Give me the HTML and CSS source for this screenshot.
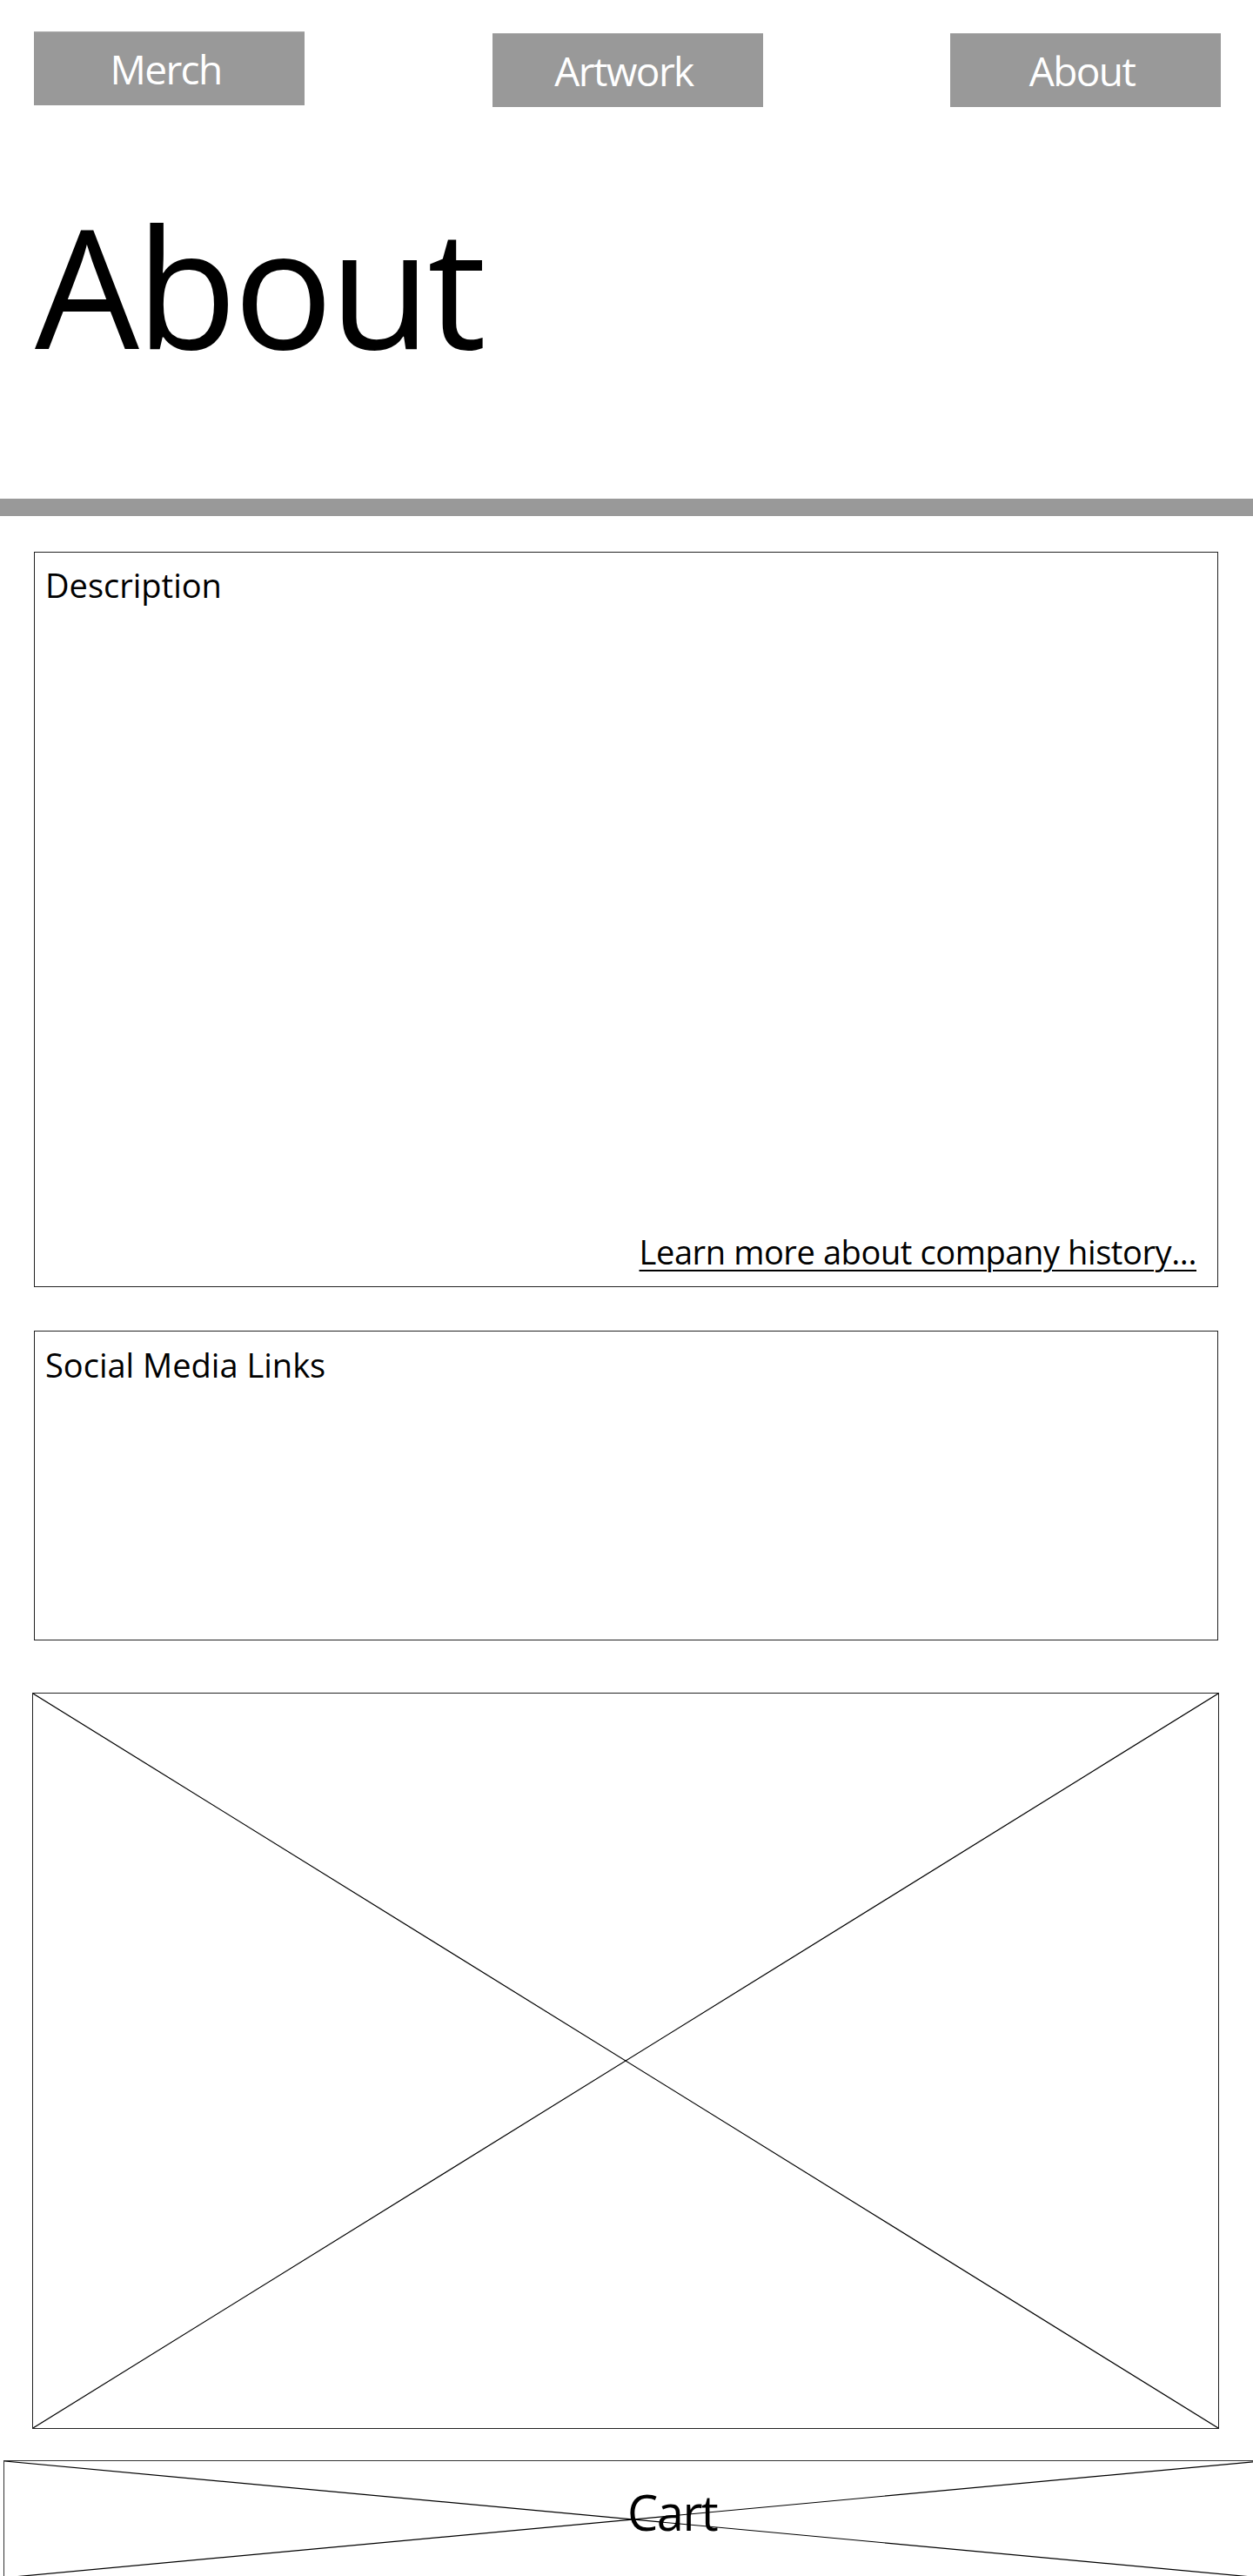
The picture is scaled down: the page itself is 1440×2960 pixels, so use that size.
FILE: index.html
```html
<!DOCTYPE html>
<html lang="en">

<head>
    <meta charset="UTF-8">
    <meta name="viewport" content="width=device-width, initial-scale=1.0">
    <title>About</title>
    <link rel="stylesheet" href="styles.css">
</head>

<body>
    <div class="page">
        <nav class="nav">
            <a class="nav-btn" href="#">Merch</a>
            <a class="nav-btn" href="#">Artwork</a>
            <a class="nav-btn" href="#">About</a>
        </nav>

        <h1 class="title">About</h1>
        <hr class="divider">

        <section class="panel panel-desc">
            <p class="panel-label">Description</p>
            <a class="more-link" href="#">Learn more about company history...</a>
        </section>

        <section class="panel panel-social">
            <p class="panel-label">Social Media Links</p>
        </section>

        <div class="placeholder">
            <svg class="cross" viewBox="0 0 100 100" preserveAspectRatio="none">
                <line x1="0" y1="0" x2="100" y2="100" />
                <line x1="100" y1="0" x2="0" y2="100" />
            </svg>
        </div>

        <footer class="cart">
            <svg class="cross" viewBox="0 0 100 100" preserveAspectRatio="none">
                <line x1="0" y1="0" x2="100" y2="100" />
                <line x1="100" y1="0" x2="0" y2="100" />
            </svg>
            <span class="cart-label">Cart</span>
        </footer>
    </div>
</body>

</html>
```

FILE: styles.css
```css
html,
body {
    margin: 0;
    background: #fff;
}

body {
    font-family: "Open Sans", "Noto Sans", Arial, sans-serif;
    color: #000;
}

.page {
    width: 1440px;
    height: 2960px;
    overflow: hidden;
}

/* top nav */
.nav {
    display: flex;
    justify-content: space-between;
    align-items: flex-start;
    padding: 36px 37px 0 39px;
}

.nav-btn {
    display: flex;
    align-items: center;
    justify-content: center;
    box-sizing: border-box;
    width: 311px;
    height: 85px;
    padding-right: 8px;
    background: #999;
    border-top: 1px solid #b4b4b4;
    color: #fff;
    font-size: 46px;
    letter-spacing: -1.6px;
    text-decoration: none;
}

.nav-btn + .nav-btn {
    margin-top: 2px;
}

.title {
    margin: 110px 0 150px 40px;
    font-size: 190px;
    font-weight: 400;
    line-height: 190px;
    letter-spacing: -4px;
}

.divider {
    height: 20px;
    margin: 0;
    border: none;
    background: #999;
}

/* boxes */
.panel {
    display: flex;
    flex-direction: column;
    box-sizing: border-box;
    width: 1361px;
    margin-left: 39px;
    border: 1px solid #222;
}

.panel-desc {
    height: 845px;
    margin-top: 41px;
    padding: 18px 24px 21px 12px;
}

.panel-social {
    height: 356px;
    margin-top: 50px;
    padding: 19px 24px 0 12px;
}

.panel-label {
    margin: 0;
    font-size: 38px;
    line-height: 38px;
}

.more-link {
    margin-top: auto;
    align-self: flex-end;
    color: #000;
    font-size: 38px;
    line-height: 38px;
    letter-spacing: -0.4px;
    text-underline-offset: 6px;
    text-decoration-thickness: 2px;
}

.placeholder {
    box-sizing: border-box;
    width: 1364px;
    height: 846px;
    margin: 60px 0 0 37px;
    border: 1px solid #222;
}

.cross {
    display: block;
    width: 100%;
    height: 100%;
}

.cross line {
    stroke: #000;
    stroke-width: 1.2;
    vector-effect: non-scaling-stroke;
}

/* cart strip, runs off the page */
.cart {
    display: grid;
    box-sizing: border-box;
    width: 1446px;
    height: 136px;
    margin: 36px 0 0 4px;
    border: 1px solid #333;
}

.cart > * {
    grid-area: 1 / 1;
}

.cart-label {
    padding: 30px 0 0 716px;
    font-size: 56px;
    line-height: 56px;
    letter-spacing: -1.5px;
}
```
